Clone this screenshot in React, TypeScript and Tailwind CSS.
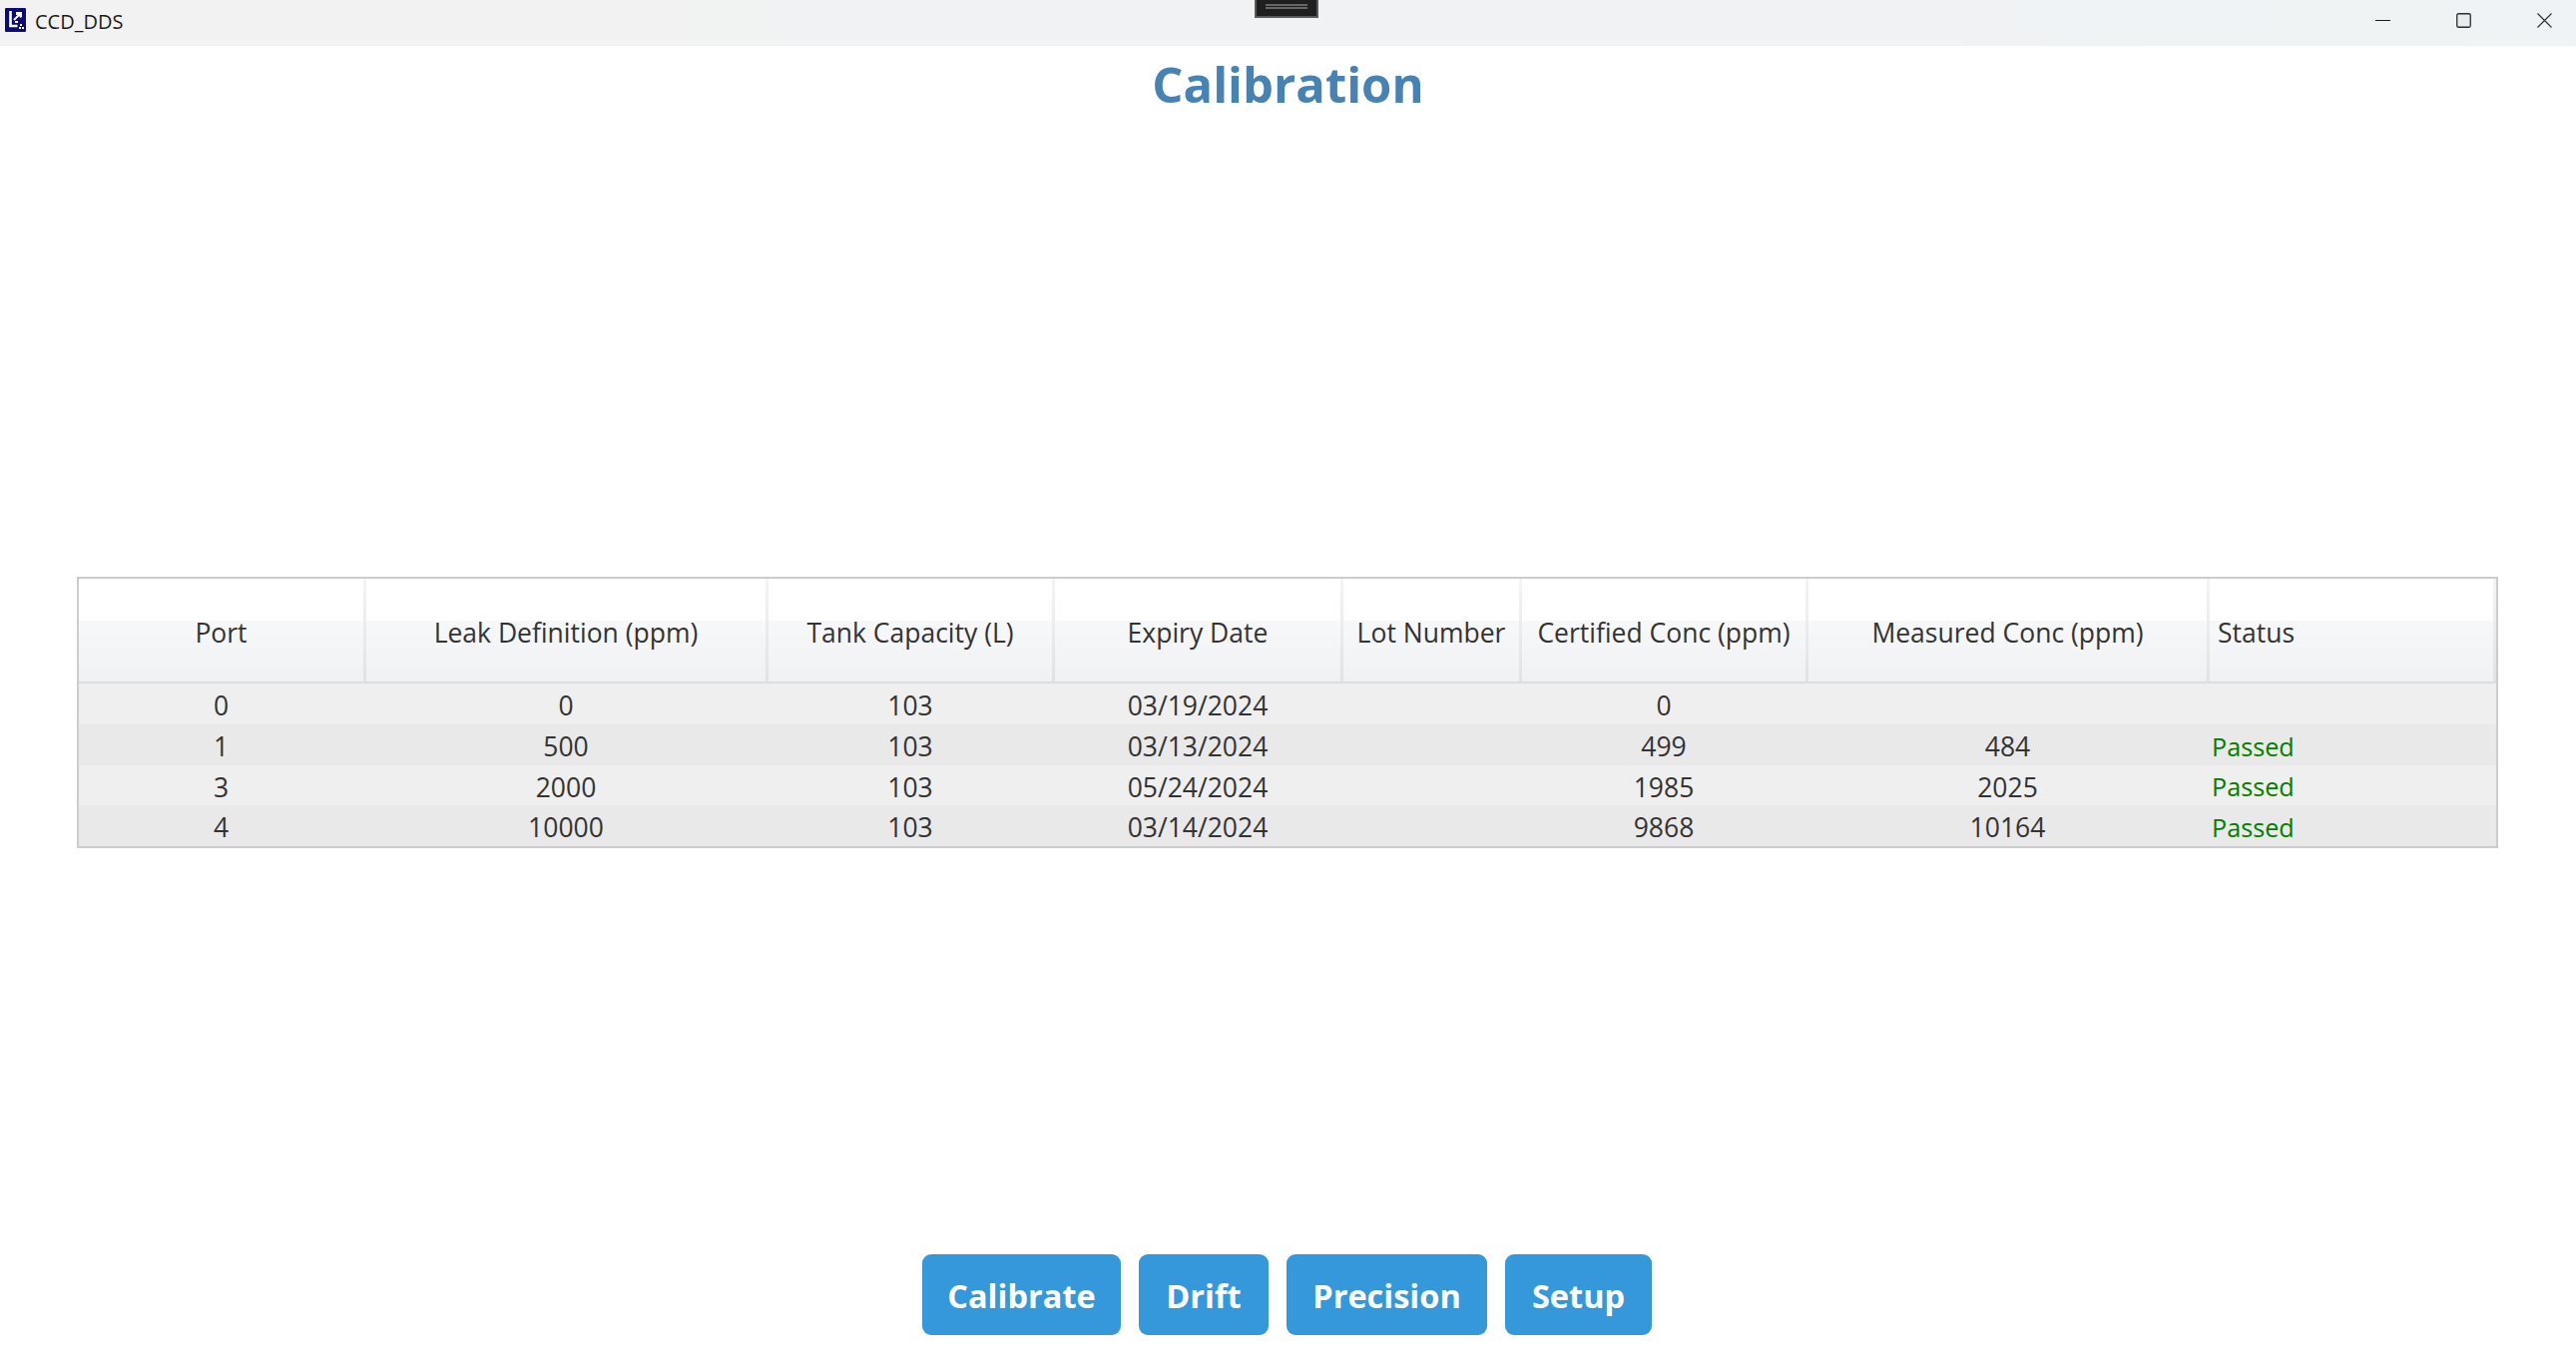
import React from 'react';

const columns = [
    { label: 'Port', width: 'w-[288px]' },
    { label: 'Leak Definition (ppm)', width: 'w-[403px]' },
    { label: 'Tank Capacity (L)', width: 'w-[287px]' },
    { label: 'Expiry Date', width: 'w-[289px]' },
    { label: 'Lot Number', width: 'w-[179px]' },
    { label: 'Certified Conc (ppm)', width: 'w-[287px]' },
    { label: 'Measured Conc (ppm)', width: 'w-[402px]' },
    { label: 'Status', width: 'w-[287px]' },
];

const rows = [
    { port: '0', leak: '0', tank: '103', expiry: '03/19/2024', lot: '', certified: '0', measured: '', status: '' },
    { port: '1', leak: '500', tank: '103', expiry: '03/13/2024', lot: '', certified: '499', measured: '484', status: 'Passed' },
    { port: '3', leak: '2000', tank: '103', expiry: '05/24/2024', lot: '', certified: '1985', measured: '2025', status: 'Passed' },
    { port: '4', leak: '10000', tank: '103', expiry: '03/14/2024', lot: '', certified: '9868', measured: '10164', status: 'Passed' },
];

const buttons = [
    { label: 'Calibrate', width: 'w-[199px]' },
    { label: 'Drift', width: 'w-[130px]' },
    { label: 'Precision', width: 'w-[201px]' },
    { label: 'Setup', width: 'w-[147px]' },
];

const AppIcon = () => (
    <svg width="21" height="24" viewBox="0 0 21 24" className="shrink-0">
        <rect width="21" height="24" rx="1" fill="#0b0b78" />
        <path d="M5.5 3v15h7" fill="none" stroke="#fff" strokeWidth="2.6" />
        <path d="M9 12l6-6" fill="none" stroke="#fff" strokeWidth="2" />
        <path d="M11 4h6v5l-2 1-1-3h-3z" fill="#fff" />
        <path d="M10 14h3M15 17h2M14 20h2M17 20h2" stroke="#fff" strokeWidth="2" />
    </svg>
);

const WindowControls = () => (
    <div className="flex items-center gap-[66px] pr-[24px] pb-[6px]">
        <svg width="15" height="15" viewBox="0 0 15 15">
            <path d="M0 7.5h15" stroke="#1a1a1a" strokeWidth="1" />
        </svg>
        <svg width="15" height="15" viewBox="0 0 15 15">
            <rect x="0.75" y="0.75" width="13.5" height="13.5" rx="1.5" fill="#e8ebed" stroke="#2a2a2a" strokeWidth="1.3" />
        </svg>
        <svg width="15" height="15" viewBox="0 0 15 15">
            <path d="M0.5 0.5l14 14M14.5 0.5l-14 14" stroke="#2a2a2a" strokeWidth="1.1" />
        </svg>
    </div>
);

const TitleBar = () => (
    <div className="relative flex h-[46px] items-center justify-between bg-gradient-to-r from-[#f3f2f2] to-[#eff3f5]">
        <div className="flex items-center gap-[9px] pl-[5px] pb-[6px]">
            <AppIcon />
            <span className="mt-[3px] text-[20px] text-[#1a1a1a]">CCD_DDS</span>
        </div>
        <div className="absolute left-[1257px] top-0 flex h-[18px] w-[64px] flex-col items-center gap-[1px] border-2 border-t-0 border-[#5a5a5a] bg-[#1f1f1f] pt-[4px]">
            <div className="h-[2px] w-[42px] bg-[#666666]" />
            <div className="h-[2px] w-[42px] bg-[#666666]" />
        </div>
        <WindowControls />
    </div>
);

const DataRow = ({ row, odd }: { row: typeof rows[number]; odd: boolean }) => (
    <div className={`flex h-[40.75px] items-center pt-[5px] text-[26.5px] text-[#333333] ${odd ? 'bg-[#e9e9e9]' : 'bg-[#efefef]'}`}>
        <div className={`${columns[0].width} pr-[3px] text-center`}>{row.port}</div>
        <div className={`${columns[1].width} pr-[3px] text-center`}>{row.leak}</div>
        <div className={`${columns[2].width} pr-[3px] text-center`}>{row.tank}</div>
        <div className={`${columns[3].width} pr-[3px] text-center`}>{row.expiry}</div>
        <div className={`${columns[4].width} pr-[3px] text-center`}>{row.lot}</div>
        <div className={`${columns[5].width} pr-[3px] text-center`}>{row.certified}</div>
        <div className={`${columns[6].width} pr-[3px] text-center`}>{row.measured}</div>
        <div className={`${columns[7].width} pl-[2px] text-[25.2px] text-[#008000]`}>{row.status}</div>
    </div>
);

const App: React.FC = () => {
    return (
        <div className="flex h-[1375px] flex-col overflow-hidden bg-white font-['Open_Sans','Noto_Sans',sans-serif]">
            <TitleBar />
            <h1 className="mt-[7px] text-center text-[49px] leading-[62px] font-bold text-[#4682b4]">Calibration</h1>

            <div className="mx-[77px] mt-[463px] w-[2426px] border-2 border-[#cccccc]">
                <div className="flex h-[105px] border-b-2 border-[#dddddd] bg-[linear-gradient(#ffffff_0,#ffffff_41%,#f7f8f9_41%,#f0f1f3_100%)]">
                    {columns.map((col, i) => (
                        <div key={col.label} className={`${col.width} flex`}>
                            <div className={`flex flex-1 items-center pt-[6px] text-[26.5px] text-[#333333] ${i === 7 ? 'justify-start pl-[8px]' : 'justify-center'}`}>
                                {col.label}
                            </div>
                            <div className="w-[3px] bg-gradient-to-b from-[#f4f4f4] to-[#e2e2e2]" />
                        </div>
                    ))}
                </div>
                {rows.map((row, i) => (
                    <DataRow key={row.port} row={row} odd={i % 2 === 1} />
                ))}
            </div>

            <div className="mt-auto mb-[37px] flex justify-center gap-[18px] pr-[2px]">
                {buttons.map(btn => (
                    <button
                        key={btn.label}
                        className={`${btn.width} h-[81px] rounded-[9px] bg-[#3498db] pt-[3px] text-[32.5px] font-bold text-white`}
                    >
                        {btn.label}
                    </button>
                ))}
            </div>
        </div>
    );
};

export default App;
